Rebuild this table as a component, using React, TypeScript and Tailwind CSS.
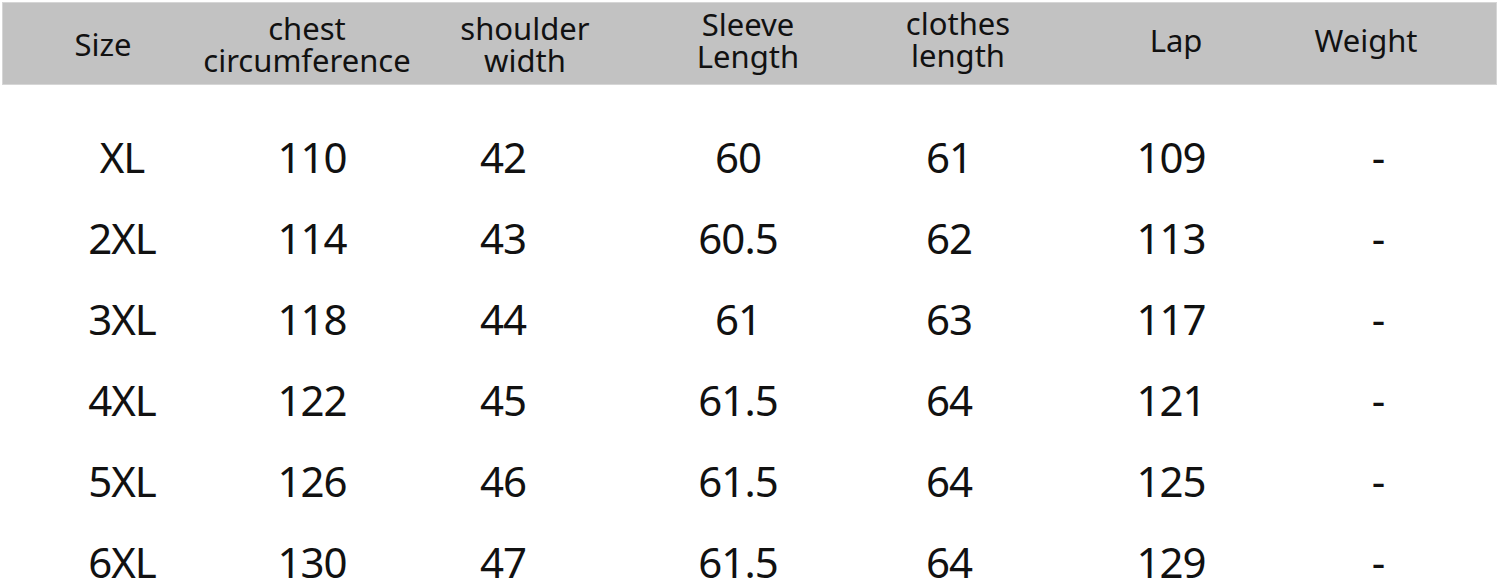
import React from "react";

const headerCols: { w: string; lines: string[]; pad: string }[] = [
  { w: "w-[200px]", lines: ["Size"], pad: "pt-[0px]" },
  { w: "w-[208px]", lines: ["chest", "circumference"], pad: "pt-[0px]" },
  { w: "w-[228px]", lines: ["shoulder", "width"], pad: "pt-[0px]" },
  { w: "w-[218px]", lines: ["Sleeve", "Length"], pad: "pb-[8px]" },
  { w: "w-[202px]", lines: ["clothes", "length"], pad: "pb-[10px]" },
  { w: "w-[234px]", lines: ["Lap"], pad: "pb-[8px]" },
  { w: "w-[146px]", lines: ["Weight"], pad: "pb-[8px]" },
];

const bodyWidths = [
  "w-[244px]",
  "w-[136px]",
  "w-[246px]",
  "w-[224px]",
  "w-[198px]",
  "w-[246px]",
  "w-[168px]",
];

const rows = [
  ["XL", "110", "42", "60", "61", "109", "-"],
  ["2XL", "114", "43", "60.5", "62", "113", "-"],
  ["3XL", "118", "44", "61", "63", "117", "-"],
  ["4XL", "122", "45", "61.5", "64", "121", "-"],
  ["5XL", "126", "46", "61.5", "64", "125", "-"],
  ["6XL", "130", "47", "61.5", "64", "129", "-"],
];

export default function App() {
  return (
    <div
      className="w-[1500px] h-[582px] bg-white overflow-hidden text-[#111]"
      style={{ fontFamily: '"Noto Sans", "Open Sans", sans-serif' }}
    >
      <div className="pt-[2px] pl-[2px] pr-[3px]">
        <div className="h-[83px] bg-[#c2c2c2] border border-[#d6d6d6] flex items-center">
          {headerCols.map((c, i) => (
            <div
              key={i}
              className={`${c.w} ${c.pad} shrink-0 flex flex-col items-center justify-center text-[31px] leading-[32px]`}
            >
              {c.lines.map((l, j) => (
                <span key={j} className="whitespace-nowrap">
                  {l}
                </span>
              ))}
            </div>
          ))}
        </div>
      </div>
      <div className="pt-[31px]">
        {rows.map((r, i) => (
          <div key={i} className="flex h-[81px] items-center">
            {r.map((v, j) => (
              <div
                key={j}
                className={`${bodyWidths[j]} shrink-0 text-center text-[42px] leading-none tracking-[-1px]`}
              >
                {v}
              </div>
            ))}
          </div>
        ))}
      </div>
    </div>
  );
}
